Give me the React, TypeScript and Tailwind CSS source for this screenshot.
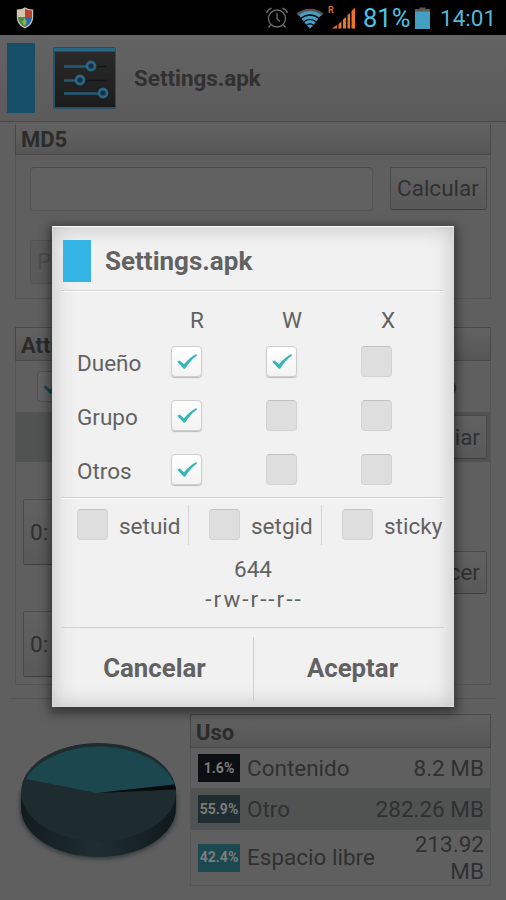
import React from 'react';
import clsx from 'clsx';

const permissions = [
  { label: 'Dueño', values: [true, true, false] },
  { label: 'Grupo', values: [true, false, false] },
  { label: 'Otros', values: [true, false, false] },
];

const usage = [
  { percent: '1.6%', label: 'Contenido', size: '8.2 MB', color: 'bg-[#0c0e11]', row: 'h-[40px]' },
  { percent: '55.9%', label: 'Otro', size: '282.26 MB', color: 'bg-[#202d30]', row: 'h-[42px] bg-[#515353]' },
  { percent: '42.4%', label: 'Espacio libre', size: '213.92 MB', color: 'bg-[#1c4850]', row: 'h-[55px]' },
];

const CheckMark = ({ className }: { className?: string }) => (
  <svg viewBox="0 0 22 17" className={clsx('h-[17px] w-[22px]', className)}>
    <path d="M1.2 8.700 3.700 7.500 8 11.2C11.5 7 15.500 3.500 20.400 1L21 2.400C16 6 12.500 10.500 9 15.800H7.800Z" fill="currentColor" />
  </svg>
);

const Checkbox = ({ checked }: { checked?: boolean }) =>
  checked ? (
    <div className="flex h-[31px] w-[31px] shrink-0 items-center justify-center rounded-[4px] border border-[#cfcfcf] bg-gradient-to-b from-white to-[#f3f3f3] shadow-[0_1px_1px_#bbb]">
      <CheckMark className="text-[#38b5b9]" />
    </div>
  ) : (
    <div className="h-[31px] w-[31px] shrink-0 rounded-[4px] border border-[#d2d2d2] border-t-[#c2c2c2] bg-[#dedede]" />
  );

const StatusBar = () => (
  <div className="flex h-[35px] items-center bg-black text-[#56b4d8]">
    <svg viewBox="0 0 18 22" className="ml-4 h-[22px] w-[18px]">
      <clipPath id="shield">
        <path d="M9 1.800C11 3 13.500 3.500 16 3.500V10C16 14.500 13 18 9 20C5 18 2 14.500 2 10V3.500C4.500 3.500 7 3 9 1.800Z" />
      </clipPath>
      <path d="M9 .3C11.500 2 14 2.500 17.200 2.500V10C17.200 15.500 14 19 9 21.500C4 19 .8 15.500 .8 10V2.500C4 2.500 6.500 2 9 .3Z" fill="#c4c1b8" />
      <g clipPath="url(#shield)">
        <path d="M0 0H9V10H0Z" fill="#d3c6b0" />
        <path d="M9 0H18V10H9Z" fill="#b8432c" />
        <path d="M0 10H9V22H0Z" fill="#488e3c" />
        <path d="M9 10H18V22H9Z" fill="#2b67ad" />
        <path d="M9 11 11 15 9 19 6 15Z" fill="#e2cf6a" opacity=".5" />
      </g>
    </svg>

    <svg viewBox="0 0 24 22" className="ml-[231px] h-[22px] w-[24px]" fill="none" stroke="#707070" strokeWidth="1.300">
      <circle cx="12" cy="11.500" r="8.500" />
      <path d="M12 6V12L15 14.500M1.500 6C2.500 3.500 4 2 6.500 1.200M22.500 6C21.500 3.500 20 2 17.500 1.200M5.500 18 3.500 20.500M18.500 18 20.500 20.500" />
    </svg>

    <svg viewBox="0 0 28 22" className="ml-[7px] h-[22px] w-[28px]" fill="none">
      <path d="M.5 6.500C8 0 20 0 27.500 6.500L25.500 9C18 3 10 3 2.500 9Z" fill="#55524f" />
      <g stroke="#469fc5" strokeWidth="3.200">
        <path d="M3.800 9.300C10 4.300 18 4.300 24.200 9.300" />
        <path d="M6.600 13C11 9.400 17 9.400 21.400 13" />
        <path d="M9.300 16.500C12.200 14.200 15.800 14.200 18.700 16.500" />
      </g>
      <path d="M11 18.500Q14 16.700 17 18.500L14 21.500Z" fill="#469fc5" />
    </svg>

    <div className="relative ml-[3px] h-[24px] w-[29px]">
      <span className="absolute top-0 left-[1px] text-[9px] leading-[9px] font-bold text-[#d66733]">R</span>
      <svg viewBox="0 0 29 24" className="h-[24px] w-[29px]" fill="#ed7424">
        <path d="M5 22.500 10 19V22.500ZM11.500 18 14.500 15.500V22.500H11.500ZM16 13.500 19 11V22.500H16ZM20.500 9 23 7V22.500H20.500ZM24.500 5 28 1.500V22.500H24.500Z" />
      </svg>
    </div>

    <span className="ml-[7px] w-[49px] pt-[3px] text-[25.500px] leading-none whitespace-nowrap text-[#4fc1e6]">81%</span>
    <svg viewBox="0 0 15 22" className="ml-[3px] h-[22px] w-[15px]">
      <path d="M4.500 .5H10.500V2H15V5H0V2H4.500Z" fill="#5b5855" />
      <path d="M0 4.500H15V22H0Z" fill="#439fc0" />
    </svg>
    <span className="ml-[10px] pt-[2px] text-[22.500px] leading-none whitespace-nowrap">14:01</span>
  </div>
);

const Header = () => (
  <div className="flex h-[87px] items-center border-b border-[#454848] bg-gradient-to-b from-[#636363] to-[#5b5b5b] pl-[7px]">
    <div className="h-[70px] w-[28px] bg-[#184f68]" />
    <svg viewBox="0 0 64 64" className="ml-[17px] h-[64px] w-[64px]">
      <defs>
        <linearGradient id="tile" x1="0" y1="0" x2="0" y2="1">
          <stop offset="0" stopColor="#292929" />
          <stop offset="1" stopColor="#1c1c1c" />
        </linearGradient>
      </defs>
      <rect x="1" y="1" width="63" height="62" rx="2" fill="#254f65" />
      <path d="M2 2H63V5H2Z" fill="#286681" />
      <rect x="3" y="6" width="60" height="55" fill="url(#tile)" />
      <path d="M12 20.500H55M12 34.500H55" stroke="#101517" strokeWidth="1.500" />
      <path d="M12 20.500H36M12 34.500H26M12 47.500H50" stroke="#255b79" strokeWidth="2.500" />
      <g fill="#172f42" stroke="#2b6685" strokeWidth="2.800">
        <circle cx="39" cy="20" r="4" />
        <circle cx="28" cy="34" r="4" />
        <circle cx="51" cy="47" r="4" />
      </g>
    </svg>
    <h1 className="ml-[18px] pt-[2px] text-[22.400px] font-bold text-[#303030]">Settings.apk</h1>
  </div>
);

const SectionTitle = ({ children, className }: { children: React.ReactNode; className?: string }) => (
  <h2 className={clsx('flex items-center border border-[#494949] bg-gradient-to-b from-[#626262] to-[#565656] pl-[5px] text-[22px] font-bold text-[#2b2b2b]', className)}>
    {children}
  </h2>
);

const DimButton = ({ children, className }: { children: React.ReactNode; className?: string }) => (
  <button className={clsx('flex items-center rounded-[2px] border border-[#4a4a4a] border-b-[#3e3e3e] bg-gradient-to-b from-[#616161] to-[#595959] px-[6px] pt-px text-[22.500px] whitespace-nowrap', className)}>
    {children}
  </button>
);

const PieChart = () => (
  <svg viewBox="0 0 175 150" className="h-[150px] w-[175px]">
    <defs>
      <linearGradient id="side" x1="0" y1="0" x2="1" y2="0">
        <stop offset="0" stopColor="#121b1e" />
        <stop offset=".5" stopColor="#1f2e32" />
        <stop offset="1" stopColor="#10191c" />
      </linearGradient>
      <filter id="soft" x="-10%" y="-10%" width="120%" height="120%">
        <feGaussianBlur stdDeviation="2" />
      </filter>
    </defs>
    <path d="M8 57V75A78 49 0 0 0 165 75V57Z" fill="#353a3b" filter="url(#soft)" />
    <path d="M9 57V73A77.500 49 0 0 0 164 73V57Z" fill="url(#side)" />
    <ellipse cx="86.500" cy="57" rx="77.500" ry="49" fill="#1e2c30" />
    <path d="M85 58 14 44A77.500 49 0 0 1 162.500 49.500Z" fill="#1c474f" />
    <path d="M85 58 162.500 49.500Q164 52 164 54.500Z" fill="#070b0e" />
  </svg>
);

const PermissionsDialog = () => (
  <div className="absolute top-[226px] left-[52px] h-[481px] w-[402px] border border-[#dadada] border-t-white bg-[#f1f1f1] text-[#626262] shadow-[0_3px_10px_3px_rgba(0,0,0,0.45)]">
    <div className="flex h-full flex-col px-[9px] shadow-[inset_0_0_22px_rgba(0,0,0,0.2)]">
      <div className="flex h-[64px] items-center border-b border-[#d4d4d4] pt-[6px] pl-px shadow-[0_1px_0_white]">
        <div className="h-[42px] w-[28px] bg-[#34b4e5]" />
        <h2 className="ml-[14px] pt-px text-[26px] font-bold">Settings.apk</h2>
      </div>

      <div className="flex h-[207px] flex-col border-b border-[#d0d0d0] pt-[16px] pl-[15px] text-[22.500px] shadow-[0_1px_0_white]">
        <div className="flex h-[28px] items-center pt-px pl-[94px] text-center">
          <span className="w-[95px] pr-[43px]">R</span>
          <span className="w-[95px] pr-[43px]">W</span>
          <span className="w-[54px]">X</span>
        </div>
        {permissions.map((permission) => (
          <div key={permission.label} className="flex h-[54px] items-center">
            <span className="w-[94px] shrink-0 pt-[4px]">{permission.label}</span>
            {permission.values.map((value, index) => (
              <div key={index} className="w-[95px] shrink-0">
                <Checkbox checked={value} />
              </div>
            ))}
          </div>
        ))}
      </div>

      <div className="mt-[7px] flex h-[40px] items-center pl-[15px] text-[22.500px]">
        <div className="flex h-full w-[112px] items-center gap-[11px] border-r border-[#d2d2d2]">
          <Checkbox />
          <span className="pt-[4px]">setuid</span>
        </div>
        <div className="flex h-full w-[133px] items-center gap-[11px] border-r border-[#d2d2d2] pl-[20px]">
          <Checkbox />
          <span className="pt-[4px]">setgid</span>
        </div>
        <div className="flex items-center gap-[11px] pl-[20px]">
          <Checkbox />
          <span className="pt-[4px]">sticky</span>
        </div>
      </div>

      <div className="flex h-[84px] flex-col items-center border-b border-[#d0d0d0] pt-[9px] text-[22.500px] leading-[30px]">
        <span>644</span>
        <span className="pl-[2px] tracking-[2px]">-rw-r--r--</span>
      </div>

      <div className="flex h-[78px] items-center pt-[3px] text-[25.800px] font-bold">
        <button className="h-[64px] w-[192px] border-r border-[#d0d0d0] pr-[6px]">Cancelar</button>
        <button className="h-[64px] flex-1 pl-[7px]">Aceptar</button>
      </div>
    </div>
  </div>
);

const App = () => {
  return (
    <div className="relative h-[900px] w-[506px] overflow-hidden bg-[#5f5f5f] font-['Roboto',sans-serif] text-[#303030]">
      <StatusBar />
      <Header />

      <section className="mx-[15px] mt-[2px]">
        <SectionTitle className="h-[31px] border-t-[#606060]">MD5</SectionTitle>
        <div className="h-[144px] border border-t-0 border-[#555] px-[14px] pt-[12px] pr-[3px]">
          <div className="flex justify-between">
            <div className="h-[44px] w-[343px] rounded-[4px] border border-[#565656] border-t-[#4a4a4a] bg-[#616161]" />
            <DimButton className="h-[43px] w-[97px]">Calcular</DimButton>
          </div>
          <button className="mt-[29px] flex h-[44px] w-[90px] items-center rounded-[3px] border border-[#535353] bg-[#5a5a5a] px-[6px] text-[22.500px] text-[#4d4d4d]">
            Pegar
          </button>
        </div>
      </section>

      <section className="mx-[15px] mt-[28px]">
        <SectionTitle className="h-[34px] pt-[2px]">Attr</SectionTitle>
        <div className="h-[324px] border border-t-0 border-[#555]">
          <div className="flex h-[51px] items-center justify-between pr-[33px] pl-[21px] text-[22.500px]">
            <div className="flex h-[31px] w-[31px] items-center justify-center rounded-[4px] border border-[#505050] bg-[#636363]">
              <CheckMark className="text-[#16494b]" />
            </div>
            <span>Oculto</span>
          </div>
          <div className="flex h-[50px] items-center justify-end bg-[#515353] pr-[3px]">
            <DimButton className="h-[44px]">Cambiar</DimButton>
          </div>
          <div className="flex h-[223px] justify-between pt-[37px] pr-[3px] pl-[7px]">
            <div className="flex flex-col gap-[46px]">
              <DimButton className="h-[66px] w-[110px]">0:</DimButton>
              <DimButton className="h-[66px] w-[110px]">0:</DimButton>
            </div>
            <DimButton className="mt-[52px] h-[43px]">Establecer</DimButton>
          </div>
        </div>
      </section>

      <div className="mx-[10px] mt-[13px] h-px bg-[#545454]" />

      <div className="flex pt-[15px] pl-[12px]">
        <div className="w-[178px] pt-[21px]">
          <PieChart />
        </div>
        <section className="w-[301px]">
          <SectionTitle className="h-[34px] pt-[2px]">Uso</SectionTitle>
          <div className="border border-t-0 border-[#555]">
            {usage.map((item) => (
              <div key={item.label} className={clsx('flex items-center pr-[6px] pl-[7px] text-[22.500px] leading-[27px]', item.row)}>
                <div className={clsx('flex h-[28px] w-[42px] shrink-0 items-center justify-center text-[14px] font-bold text-[#7c7c7c]', item.color)}>
                  {item.percent}
                </div>
                <span className="mr-[12px] ml-[7px] shrink-0">{item.label}</span>
                <span className="ml-auto text-right">{item.size}</span>
              </div>
            ))}
          </div>
        </section>
      </div>

      <PermissionsDialog />
    </div>
  );
};

export default App;
